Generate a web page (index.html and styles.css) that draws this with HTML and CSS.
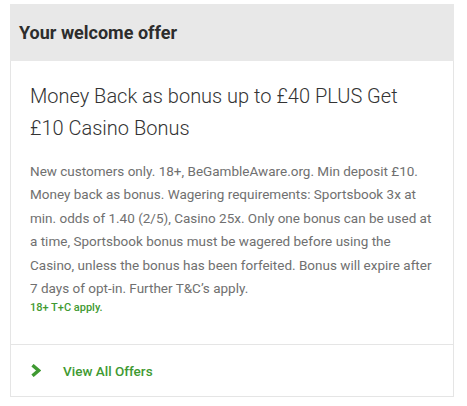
FILE: index.html
```html
<!DOCTYPE html>
<html lang="en">
<head>
    <meta charset="UTF-8">
    <title>Your welcome offer</title>
    <link rel="stylesheet" href="styles.css">
</head>
<body>
    <div class="offer-card">
        <!-- Header -->
        <div class="offer-header">
            <h2>Your welcome offer</h2>
        </div>

        <!-- Offer details -->
        <div class="offer-body">
            <h3 class="offer-title">Money Back as bonus up to £40 PLUS Get £10 Casino Bonus</h3>
            <p class="offer-terms">New customers only. 18+, BeGambleAware.org. Min deposit £10. Money back as bonus. Wagering requirements: Sportsbook 3x at min. odds of 1.40 (2/5), Casino 25x. Only one bonus can be used at a time, Sportsbook bonus must be wagered before using the Casino, unless the bonus has been forfeited. Bonus will expire after 7 days of opt-in. Further T&amp;C’s apply.</p>
            <p class="offer-small">18+ T+C apply.</p>
        </div>

        <!-- Footer link -->
        <a class="offer-footer" href="#">
            <svg class="chevron" width="10" height="13" viewBox="0 0 10 13">
                <path d="M1.5 1.2 L7.6 6.5 L1.5 11.8" fill="none" stroke="#3f9a32" stroke-width="3.4"/>
            </svg>
            <span>View All Offers</span>
        </a>
    </div>
</body>
</html>
```

FILE: styles.css
```css
/* General Styling */
body {
    margin: 4px 13px 0 10px;
    font-family: Roboto, "Liberation Sans", sans-serif;
    background-color: #fff;
}

.offer-card {
    width: 444px;
}

/* Header */
.offer-header {
    background-color: #e8e8e8;
    height: 57px;
    display: flex;
    align-items: center;
    padding: 0 9px;
}

.offer-header h2 {
    margin: 0;
    font-size: 18px;
    font-weight: 700;
    color: #2d2d2d;
}

/* Body */
.offer-body {
    border-left: 1px solid #e5e5e5;
    border-right: 1px solid #e5e5e5;
    padding: 19px 19px 28px 19px;
}

.offer-title {
    margin: 0;
    font-size: 20px;
    font-weight: 300;
    line-height: 32px;
    color: #333;
}

.offer-terms {
    margin: 16px 0 0 0;
    font-size: 13.5px;
    line-height: 23.4px;
    color: #707070;
}

.offer-small {
    margin: 0;
    font-size: 11px;
    font-weight: 500;
    line-height: 16px;
    color: #3f9a32;
}

/* Footer */
.offer-footer {
    display: flex;
    align-items: center;
    gap: 22px;
    height: 51px;
    padding: 0 20px;
    border: 1px solid #e5e5e5;
    text-decoration: none;
    color: #3f9a32;
    font-size: 13.5px;
    font-weight: 500;
}
```
